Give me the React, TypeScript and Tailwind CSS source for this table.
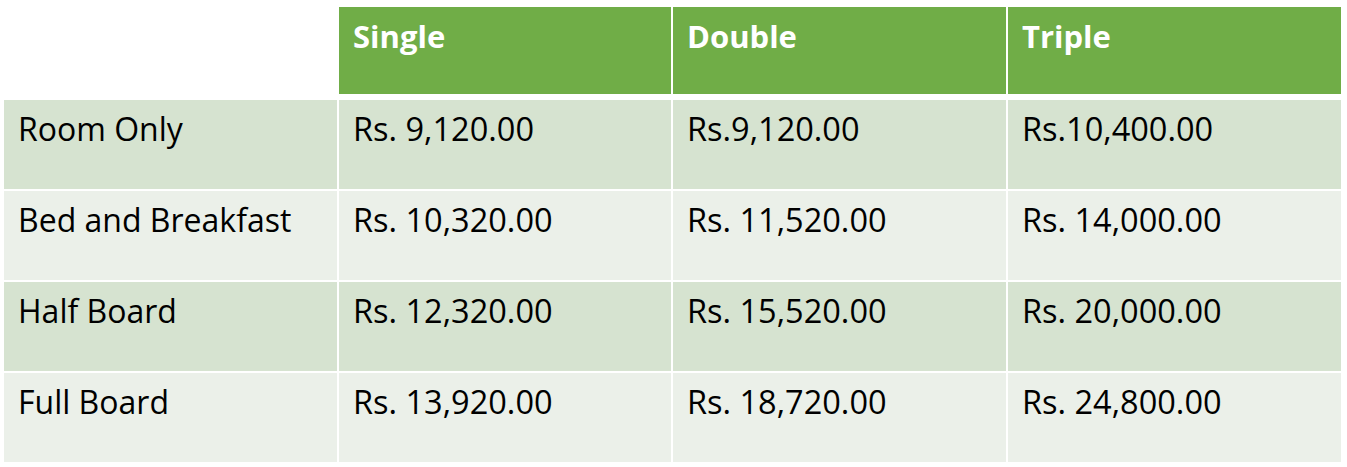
import React from "react";

interface Row {
  label: string;
  prices: string[];
}

const columns = ["Single", "Double", "Triple"];

const rows: Row[] = [
  { label: "Room Only", prices: ["Rs. 9,120.00", "Rs.9,120.00", "Rs.10,400.00"] },
  { label: "Bed and Breakfast", prices: ["Rs. 10,320.00", "Rs. 11,520.00", "Rs. 14,000.00"] },
  { label: "Half Board", prices: ["Rs. 12,320.00", "Rs. 15,520.00", "Rs. 20,000.00"] },
  { label: "Full Board", prices: ["Rs. 13,920.00", "Rs. 18,720.00", "Rs. 24,800.00"] },
];

const gridCols = "grid grid-cols-[333px_332px_333px_333px] gap-x-[2px]";
const cellText = "pl-[14px] pt-[7px] leading-[44px]";

export default function App() {
  return (
    <div
      className="w-[1347px] h-[467px] bg-white pt-[7px] pl-[4px] text-black"
      style={{ fontFamily: '"Open Sans", "Noto Sans", sans-serif' }}
    >
      {/* header */}
      <div className={`${gridCols} h-[87px]`}>
        <div />
        {columns.map((c) => (
          <div key={c} className={`bg-[#70ad47] text-white font-bold text-[31px] ${cellText}`}>
            {c}
          </div>
        ))}
      </div>

      {/* body */}
      <div className="mt-[6px] flex flex-col gap-y-[2px]">
        {rows.map((r, i) => {
          const bg = i % 2 === 0 ? "bg-[#d6e3d0]" : "bg-[#ebf0e9]";
          return (
            <div key={r.label} className={`${gridCols} h-[89px]`}>
              <div className={`${bg} text-[32px] ${cellText}`}>{r.label}</div>
              {r.prices.map((p, j) => (
                <div key={j} className={`${bg} text-[32.5px] ${cellText}`}>
                  {p}
                </div>
              ))}
            </div>
          );
        })}
      </div>
    </div>
  );
}
